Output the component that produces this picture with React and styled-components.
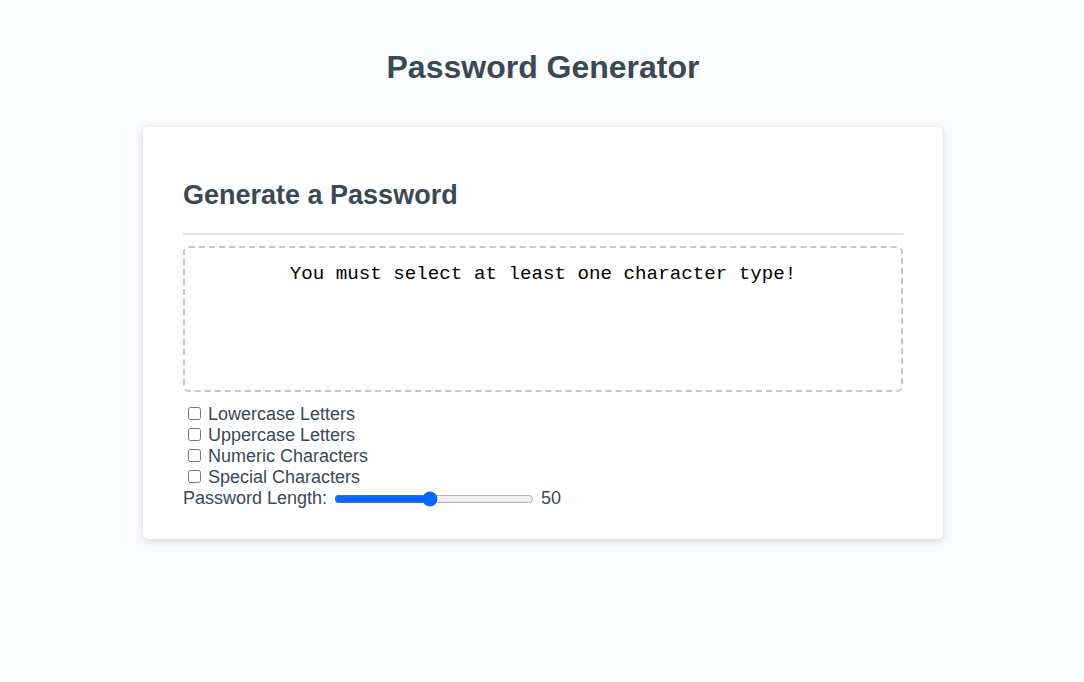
import React, { useState } from "react";
import styled, { createGlobalStyle } from "styled-components";

const GlobalStyle = createGlobalStyle`
  * { box-sizing: border-box; }
  html, body {
    margin: 0;
    padding: 0;
    background: #f9fbfd;
    font-family: "Liberation Sans", Arial, sans-serif;
    color: hsl(206, 17%, 28%);
  }
`;

const WRAPPER = styled.div`
  padding: 0 19px 40px 21px;
`;

const HEADER = styled.header`
  h1 {
    text-align: center;
    font-size: 32px;
    font-weight: 700;
    margin: 0;
    padding: 49px 0 41px;
    line-height: 37px;
  }
`;

const CARD = styled.div`
  background: #fff;
  border-radius: 5px;
  box-shadow: rgba(0, 0, 0, 0.15) 0 2px 8px;
  max-width: 800px;
  margin: 0 auto;
  padding: 30px 40px 29px;
  font-size: 18px;
`;

const CARD_HEADER = styled.div`
  h2 {
    font-size: 27px;
    font-weight: 700;
    margin: 23px 0 0;
    line-height: 31px;
  }

  &::after {
    content: "";
    display: block;
    width: 100%;
    height: 2px;
    background: #e2e5e8;
    margin-top: 22px;
  }
`;

const OUTPUT = styled.textarea`
  display: block;
  width: 100%;
  height: 146px;
  margin-top: 11px;
  padding: 15px 10px;
  border: 2px dashed #c0c7cf;
  border-radius: 6px;
  resize: none;
  font-family: "Liberation Mono", "Courier New", monospace;
  font-size: 19.2px;
  text-align: center;
  color: #000;
  background: #fff;
  outline: none;
`;

const OPTIONS = styled.div`
  display: flex;
  flex-direction: column;
  padding-top: 11px;
`;

const OPTION = styled.label`
  display: flex;
  align-items: center;
  height: 21px;
  line-height: 20px;

  input {
    width: 13px;
    height: 13px;
    margin: 0 7px 0 5px;
  }
`;

const LENGTH_ROW = styled.div`
  display: flex;
  align-items: center;
  height: 23px;
  gap: 7px;

  input[type="range"] {
    width: 200px;
    margin: 0;
    accent-color: #0a66ff;
  }
`;

const options = [
  "Lowercase Letters",
  "Uppercase Letters",
  "Numeric Characters",
  "Special Characters",
];

const App = () => {
  const [length, setLength] = useState(50);

  return (
    <>
      <GlobalStyle />
      <WRAPPER>
        <HEADER>
          <h1>Password Generator</h1>
        </HEADER>
        <CARD>
          <CARD_HEADER>
            <h2>Generate a Password</h2>
          </CARD_HEADER>
          <OUTPUT
            readOnly
            value="You must select at least one character type!"
          />
          <OPTIONS>
            {options.map((o) => (
              <OPTION key={o}>
                <input type="checkbox" />
                {o}
              </OPTION>
            ))}
            <LENGTH_ROW>
              <span>Password Length:</span>
              <input
                type="range"
                min="8"
                max="96"
                value={length}
                onChange={(e) => setLength(e.target.value)}
              />
              <span>{length}</span>
            </LENGTH_ROW>
          </OPTIONS>
        </CARD>
      </WRAPPER>
    </>
  );
};

export default App;
